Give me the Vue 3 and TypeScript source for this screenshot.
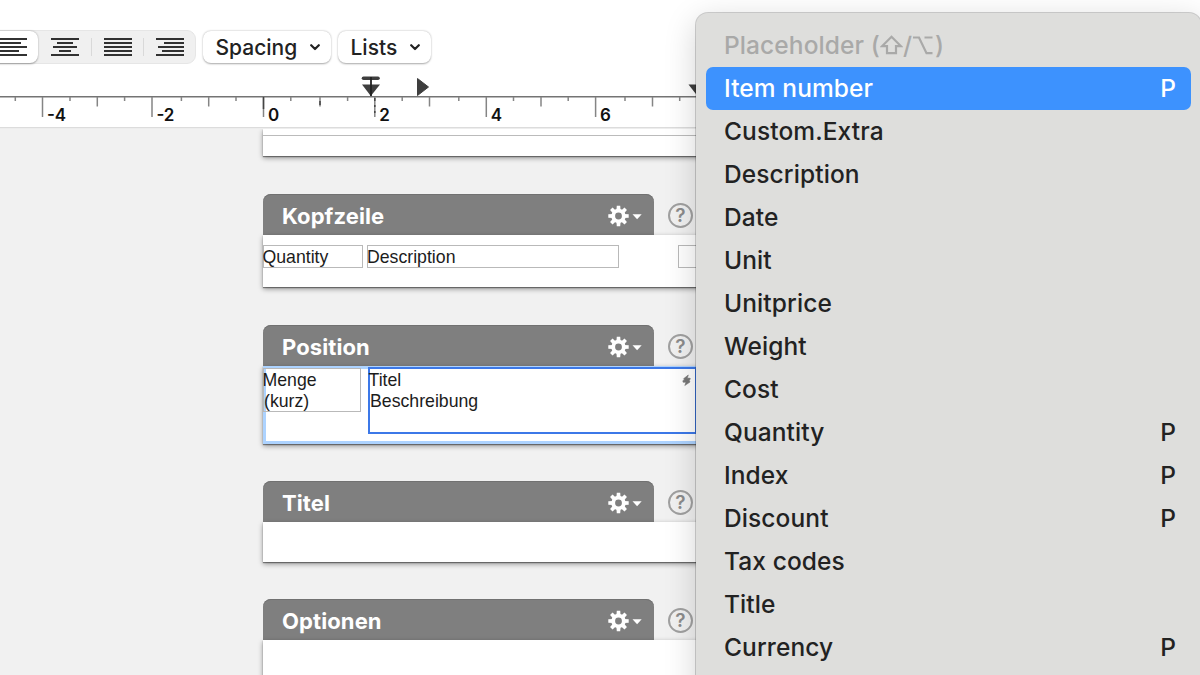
<script setup lang="ts">
interface MenuEntry {
  label: string
  key?: string
  selected?: boolean
}
interface Section {
  id: string
  title: string
}

const entries: MenuEntry[] = [
  { label: 'Item number', key: 'P', selected: true },
  { label: 'Custom.Extra' },
  { label: 'Description' },
  { label: 'Date' },
  { label: 'Unit' },
  { label: 'Unitprice' },
  { label: 'Weight' },
  { label: 'Cost' },
  { label: 'Quantity', key: 'P' },
  { label: 'Index', key: 'P' },
  { label: 'Discount', key: 'P' },
  { label: 'Tax codes' },
  { label: 'Title' },
  { label: 'Currency', key: 'P' },
]

const sections: Section[] = [
  { id: 'kopfzeile', title: 'Kopfzeile' },
  { id: 'position', title: 'Position' },
  { id: 'titel', title: 'Titel' },
  { id: 'optionen', title: 'Optionen' },
]

const alignments: { id: string; lines: [number, number][] }[] = [
  { id: 'left', lines: [[0, 28], [0, 22], [0, 28], [0, 20], [0, 28]] },
  { id: 'center', lines: [[0, 28], [6, 22], [2, 26], [8, 20], [0, 28]] },
  { id: 'justify', lines: [[0, 28], [0, 28], [0, 28], [0, 28], [0, 28]] },
  { id: 'right', lines: [[0, 28], [8, 28], [2, 28], [6, 28], [0, 28]] },
]

const major = [
  { x: 42.5, label: '-4' },
  { x: 152, label: '-2' },
  { x: 263.5, label: '0' },
  { x: 374.8, label: '2' },
  { x: 486.3, label: '4' },
  { x: 595.6, label: '6' },
]
const medium = [97.3, 208.7, 320, 429.5, 541, 652.5]
const minor = [15.3, 70, 124.6, 181.4, 236, 290.8, 347.6, 402.2, 458.8, 513.5, 568.2, 625, 679.7]
const teeth = [0, 45, 90, 135, 180, 225, 270, 315]
</script>

<template>
  <div class="screen">
    <header class="toolbar">
      <div class="segments">
        <div v-for="a in alignments" :key="a.id" class="segment" :class="a.id">
          <svg width="28" height="18" viewBox="0 0 28 18">
            <path
              v-for="(l, i) in a.lines"
              :key="i"
              :d="`M${l[0]} ${1 + i * 4}H${l[1]}`"
              stroke="#1b1b1b"
              stroke-width="1.8"
            />
          </svg>
        </div>
      </div>
      <button class="dropdown spacing">
        <span>Spacing</span>
        <svg width="10" height="7" viewBox="0 0 10 7"><path d="M1.2 1.2 5 5 8.800 1.200" /></svg>
      </button>
      <button class="dropdown lists">
        <span>Lists</span>
        <svg width="10" height="7" viewBox="0 0 10 7"><path d="M1.2 1.2 5 5 8.800 1.200" /></svg>
      </button>
    </header>

    <svg class="ruler" width="1200" height="54" viewBox="0 75 1200 54">
      <path d="M0 96.700H1200" stroke="#747474" stroke-width="1.500" />
      <path v-for="m in major" :key="m.x" :d="`M${m.x} 97V117`" stroke="#858585" stroke-width="1.500" />
      <path v-for="x in medium" :key="x" :d="`M${x} 97V106.500`" stroke="#858585" stroke-width="1.500" />
      <path v-for="x in minor" :key="x" :d="`M${x} 97V101`" stroke="#858585" stroke-width="1.500" />
      <path d="M263.500 97v12M320 101v4M374.800 98v3M374.800 105v2M374.800 111v2" stroke="#444" stroke-width="1.500" />
      <text v-for="m in major" :key="m.label" :x="m.x + 4.400" y="121">{{ m.label }}</text>
      <path d="M363.500 78.200h14.500" stroke="#3e3e3e" stroke-width="3.600" stroke-linecap="round" />
      <path d="M362 84.500h18l-9.200 11.500z" fill="#3e3e3e" />
      <path d="M371 77v19" stroke="#222" stroke-width="1.800" />
      <path d="M417.500 78.500 428.500 87 417.500 95.500z" fill="#3e3e3e" stroke="#3e3e3e" stroke-linejoin="round" />
      <path d="M688.500 84.500h18l-9 11.500z" fill="#3e3e3e" />
      <path d="M0 127.800H1200" stroke="#dcdcdc" stroke-width="1.500" />
    </svg>

    <main class="workspace">
      <div class="sheet previous"></div>
      <section v-for="s in sections" :key="s.id" class="section" :class="s.id">
        <div class="heading">
          <div class="tab">
            <span>{{ s.title }}</span>
            <svg class="gear" width="36" height="22" viewBox="0 0 36 22">
              <g transform="translate(11.500 11)">
                <path
                  v-for="t in teeth"
                  :key="t"
                  :transform="`rotate(${t})`"
                  d="M-2.100 -5.500-1.700 -10.200H1.700L2.100 -5.500z"
                  fill="#fff"
                />
                <circle r="5.300" fill="none" stroke="#fff" stroke-width="3.800" />
              </g>
              <path d="M25.500 9.300h9.200l-4.600 5z" fill="#fff" />
            </svg>
          </div>
          <div class="help">?</div>
        </div>
        <div class="sheet">
          <template v-if="s.id === 'kopfzeile'">
            <div class="field quantity">Quantity</div>
            <div class="field description">Description</div>
            <div class="field more"></div>
          </template>
          <template v-if="s.id === 'position'">
            <div class="field menge">Menge<br />(kurz)</div>
            <div class="field editing">
              <span>Titel<br />Beschreibung</span>
              <svg width="9" height="13" viewBox="0 0 9 13">
                <path
                  d="M6.300 1 1.500 4.800 2.500 5.900 .8 6.800 1.200 8.300 4 8.200 2.800 11.500 8 8 7.200 6.300 8.500 5 7.500 4 5.200 4.300z"
                  fill="#777"
                  stroke="#777"
                  stroke-width=".6"
                />
              </svg>
            </div>
          </template>
        </div>
      </section>
    </main>

    <aside class="menu">
      <div class="caption">
        <span>Placeholder (</span>
        <svg class="shift" width="23" height="20" viewBox="0 0 23 20">
          <path d="M11.500 1.800 21 11.200H16V18.200H7V11.200H2z" />
        </svg>
        <span>/</span>
        <svg class="option" width="22" height="19" viewBox="0 0 22 19">
          <path d="M1 1.500H7L14.500 17.200H20.500M12.500 1.500H20.500" />
        </svg>
        <span class="close">)</span>
      </div>
      <div v-for="e in entries" :key="e.label" class="entry" :class="{ selected: e.selected }">
        <span>{{ e.label }}</span>
        <span v-if="e.key" class="key">{{ e.key }}</span>
      </div>
    </aside>
  </div>
</template>

<style>
body {
  margin: 0;
  overflow: hidden;
}
</style>

<style scoped>
.screen {
  position: relative;
  width: 1200px;
  height: 675px;
  overflow: hidden;
  background: #fff;
  font-family: Inter, 'Liberation Sans', sans-serif;
  color: #222;
}
.toolbar {
  display: flex;
  align-items: center;
  height: 45px;
  padding-top: 24px;
  margin-bottom: 6px;
}
.segments {
  display: flex;
  align-items: center;
  box-sizing: border-box;
  width: 214px;
  height: 34px;
  margin-left: -18px;
  border: 1px solid #e6e6e6;
  border-radius: 9px;
  background: #f0f0f0;
}
.segment {
  display: flex;
  align-items: center;
  justify-content: center;
  width: 52px;
  height: 18px;
  border-left: 1.500px solid #d9d9d9;
  box-sizing: border-box;
}
.segment.center,
.segment.left {
  border-left: 0;
}
.segment.left {
  width: 55px;
  height: 32px;
  padding-left: 5px;
  border-radius: 8px;
  background: #fff;
  box-shadow: 0 0.5px 2px rgba(0, 0, 0, 0.35);
}
.segment.center {
  width: 54px;
}
.dropdown {
  display: flex;
  align-items: center;
  justify-content: space-between;
  box-sizing: border-box;
  height: 32px;
  padding: 2px 11px 0 13px;
  border: 0;
  border-radius: 8px;
  background: #fff;
  box-shadow: 0 0.5px 2px rgba(0, 0, 0, 0.35);
  font-family: inherit;
  font-size: 21px;
  font-weight: 450;
  color: #222;
}
.dropdown span {
  margin-left: -0.5px;
}
.dropdown path {
  fill: none;
  stroke: #222;
  stroke-width: 2.200;
  stroke-linecap: round;
  stroke-linejoin: round;
}
.spacing {
  width: 128px;
  margin-left: 7px;
}
.lists {
  width: 93px;
  margin-left: 7px;
}
.ruler {
  display: block;
}
.ruler text {
  font-size: 17px;
  font-weight: 600;
  fill: #111;
}
.workspace {
  display: flow-root;
  height: 546px;
  background: #f1f1f1;
}
.sheet {
  position: relative;
  display: flex;
  box-sizing: border-box;
  width: 600px;
  margin-left: 263px;
  background: #fff;
  box-shadow: 0 1px 1px rgba(0, 0, 0, 0.4), 0 2px 5px rgba(0, 0, 0, 0.4);
}
.previous {
  height: 27px;
  clip-path: inset(0 0 -10px -10px);
}
.previous::before {
  content: '';
  width: 100%;
  height: 7px;
  box-sizing: border-box;
  border-bottom: 1px solid #bbb;
}
.section {
  margin-top: 38px;
}
.heading {
  display: flex;
  align-items: center;
  height: 41px;
  margin-left: 263px;
}
.tab {
  display: flex;
  align-items: center;
  justify-content: space-between;
  box-sizing: border-box;
  width: 391px;
  height: 100%;
  padding: 2px 11px 0 19px;
  border-radius: 8px 8px 0 0;
  background: #7f7f7f;
  box-shadow: inset 0 1px 0 #717171;
  color: #fff;
  font-size: 22px;
  font-weight: 700;
  letter-spacing: 0.1px;
}
.help {
  display: flex;
  align-items: center;
  justify-content: center;
  box-sizing: border-box;
  width: 25px;
  height: 25px;
  margin: 2px 0 0 14px;
  border: 2px solid #a0a0a0;
  border-radius: 50%;
  color: #8c8c8c;
  font-size: 19px;
  font-weight: 600;
}
.kopfzeile .sheet {
  height: 52px;
  padding-top: 10px;
}
.position .sheet {
  height: 78px;
  border: 3px solid #add3ff;
  border-right: 0;
}
.titel .sheet {
  height: 40px;
}
.optionen .sheet {
  height: 70px;
}
.titel {
  margin-top: 37px;
}
.optionen {
  margin-top: 37px;
}
.field {
  box-sizing: border-box;
  border: 1px solid #b9b9b9;
  font-family: 'Liberation Sans', Arial, sans-serif;
  font-size: 17.700px;
  line-height: 21.500px;
  color: #1c1c1c;
}
.quantity {
  width: 100px;
  height: 23px;
  padding-top: 1px;
  text-indent: -1.500px;
}
.description {
  width: 252px;
  height: 23px;
  padding-top: 1px;
  margin-left: 4px;
  text-indent: -1px;
}
.more {
  width: 60px;
  height: 23px;
  margin-left: 59px;
}
.menge {
  width: 98px;
  height: 44px;
  margin: -1px 0 0 -3px;
  padding-top: 1px;
  line-height: 21px;
}
.menge,
.editing span {
  text-indent: -1.500px;
}
.editing {
  display: flex;
  justify-content: space-between;
  width: 329px;
  height: 67px;
  margin: -2px 0 0 7px;
  padding: 1px 4px 0 0;
  border: 2px solid #3c78e8;
  line-height: 21px;
}
.editing svg {
  margin-top: 4px;
}
.menu {
  position: absolute;
  top: 13px;
  left: 696px;
  box-sizing: border-box;
  width: 505px;
  height: 700px;
  padding: 11px 10px;
  border-radius: 12px;
  background: #dededc;
  box-shadow: 0 0 0 1px rgba(0, 0, 0, 0.18), 0 8px 32px rgba(0, 0, 0, 0.18);
  font-size: 24.500px;
  font-weight: 450;
}
.caption,
.entry {
  display: flex;
  align-items: center;
  box-sizing: border-box;
  height: 43px;
  padding: 0 15px 1px 18px;
  letter-spacing: 0.1px;
}
.caption {
  color: #a9a9a8;
}
.caption svg {
  fill: none;
  stroke: #a9a9a8;
  stroke-width: 2.200;
}
.close {
  margin-left: 1px;
}
.entry {
  justify-content: space-between;
}
.selected {
  border-radius: 7px;
  background: #3d92fe;
  color: #fff;
}
</style>
